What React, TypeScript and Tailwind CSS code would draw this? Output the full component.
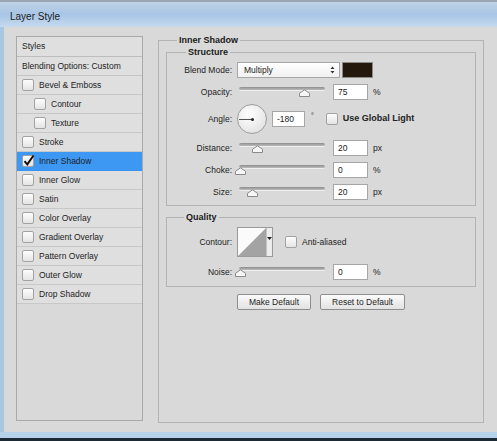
import type { ReactNode } from 'react'

type StyleRow = { label: string; sub?: boolean; checked?: boolean }

const styleRows: StyleRow[] = [
  { label: 'Bevel & Emboss' },
  { label: 'Contour', sub: true },
  { label: 'Texture', sub: true },
  { label: 'Stroke' },
  { label: 'Inner Shadow', checked: true },
  { label: 'Inner Glow' },
  { label: 'Satin' },
  { label: 'Color Overlay' },
  { label: 'Gradient Overlay' },
  { label: 'Pattern Overlay' },
  { label: 'Outer Glow' },
  { label: 'Drop Shadow' },
]

function CheckBox({ checked = false }: { checked?: boolean }) {
  return (
    <span className="relative block h-[12px] w-[12px] shrink-0 rounded-[2px] border border-[#a2a2a2] bg-gradient-to-b from-[#fdfdfd] to-[#e4e4e4]">
      {checked && (
        <svg className="absolute -left-[1px] -top-[3px]" width="14" height="14" viewBox="0 0 14 14">
          <path d="M2.5 8.2l2.8 3.1L11.5 2.5" fill="none" stroke="#111" strokeWidth="2" />
        </svg>
      )}
    </span>
  )
}

function Slider({ pos }: { pos: number }) {
  return (
    <div className="relative h-[16px] w-[96px]">
      <div className="absolute left-[2px] top-[3px] h-[4px] w-[86px] rounded-full border-b border-[#eeeeee] bg-gradient-to-b from-[#8c8c8c] to-[#bdbdbd]" />
      <svg className="absolute top-[5px]" style={{ left: 2 + pos - 5.5 }} width="11" height="8" viewBox="0 0 11 8">
        <path d="M0.5 7.5V4.3L5.5 0.8l5 3.5v3.2z" fill="#f6f6f6" stroke="#8a8a8a" />
      </svg>
    </div>
  )
}

function NumBox({ value, w = 'w-[35px]' }: { value: string; w?: string }) {
  return (
    <div className={`${w} h-[16px] border border-[#a6a6a6] bg-white pl-[4px] leading-[14px]`}>{value}</div>
  )
}

function Row({ label, className = '', children }: { label: string; className?: string; children: ReactNode }) {
  return (
    <div className={`flex items-center ${className}`}>
      <span className="w-[65px] text-right">{label}</span>
      <div className="ml-[5px] flex items-center">{children}</div>
    </div>
  )
}

function SliderRow({ label, pos, value, unit, className = '' }: { label: string; pos: number; value: string; unit: string; className?: string }) {
  return (
    <Row label={label} className={`h-[16px] ${className}`}>
      <Slider pos={pos} />
      <NumBox value={value} />
      <span className="ml-[5px]">{unit}</span>
    </Row>
  )
}

export default function App() {
  return (
    <div className="flex h-[441px] w-[497px] flex-col overflow-hidden font-['Liberation_Sans',Arial,sans-serif] text-[8.5px] text-[#222]">
      <div className="flex h-[27px] shrink-0 items-center border-t-2 border-[#9aa5b0] bg-gradient-to-b from-[#bfd2e6] via-[#a8c5e6] to-[#c6daee] pl-[10px] pt-[3px] text-[10px] text-[#1c1c1c]">
        Layer Style
      </div>

      <div className="flex flex-1 items-start border-l-4 border-[#a9c6e3] bg-[#d9d9d9] pl-[12px]">
        <div className="mt-[9px] flex h-[385px] w-[127px] flex-col border border-[#a9a9a9] bg-[#d9d9d9]">
          <div className="flex h-[20px] shrink-0 items-center border-b border-[#bdbdbd] bg-[#dfdfdf] pl-[5px]">Styles</div>
          <div className="flex h-[19px] shrink-0 items-center border-b border-[#c4c4c4] bg-[#dfdfdf] pl-[5px]">
            Blending Options: Custom
          </div>
          {styleRows.map(row => (
            <div
              key={row.label}
              className={`flex h-[19px] shrink-0 items-center gap-[5px] border-b ${
                row.checked ? 'border-[#3a93ee] bg-[#3d98f4]' : 'border-[#c8c8c8] bg-[#dfdfdf]'
              } ${row.sub ? 'pl-[17px]' : 'pl-[5px]'}`}
            >
              <CheckBox checked={row.checked} />
              <span>{row.label}</span>
            </div>
          ))}
        </div>

        <fieldset className="ml-[15px] mt-[7px] h-[389px] w-[326px] border border-[#b3b3b3]">
          <legend className="ml-[18px] px-[2px] text-[9px] font-bold leading-[12px] text-[#1a1a1a]">Inner Shadow</legend>

          <div className="flex flex-col items-center">
            <fieldset className="w-[310px] border border-[#b3b3b3] pb-[5px]">
              <legend className="ml-[19px] px-[2px] text-[9px] font-bold leading-[12px] text-[#1a1a1a]">Structure</legend>

              <Row label="Blend Mode:" className="mt-[4px] h-[16px]">
                <div className="flex h-[16px] w-[103px] items-center justify-between border border-[#a6a6a6] bg-gradient-to-b from-white to-[#f1f1f1] pl-[6px] pr-[4px]">
                  <span>Multiply</span>
                  <svg width="5" height="8" viewBox="0 0 5 8">
                    <path d="M2.5 0.5L4.5 3H0.5zM2.5 7.5L4.5 5H0.5z" fill="#333" />
                  </svg>
                </div>
                <div className="ml-[2px] h-[16px] w-[31px] border border-[#8a8a8a] bg-[#24170b]" />
              </Row>

              <SliderRow label="Opacity:" pos={65} value="75" unit="%" className="mt-[6px]" />

              <Row label="Angle:" className="mt-[4px] h-[30px]">
                <div className="relative h-[30px] w-[30px] rounded-full border border-[#9c9c9c] bg-[radial-gradient(circle_at_40%_35%,#ffffff,#e6e6e6_70%,#d2d2d2)]">
                  <div className="absolute left-[1px] top-[14px] h-px w-[13px] bg-[#555]" />
                  <div className="absolute left-[13px] top-[13px] h-[3px] w-[3px] rounded-full bg-[#222]" />
                </div>
                <div className="ml-[5px]">
                  <NumBox value="-180" w="w-[33px]" />
                </div>
                <span className="-mt-[5px] ml-[6px] text-[7px]">°</span>
                <div className="ml-[12px]">
                  <CheckBox />
                </div>
                <span className="ml-[5px] text-[9px] font-bold">Use Global Light</span>
              </Row>

              <SliderRow label="Distance:" pos={18.5} value="20" unit="px" className="mt-[6px]" />
              <SliderRow label="Choke:" pos={1.5} value="0" unit="%" className="mt-[6px]" />
              <SliderRow label="Size:" pos={13.5} value="20" unit="px" className="mt-[6px]" />
            </fieldset>

            <fieldset className="mt-[5px] w-[310px] border border-[#b3b3b3] pb-[6px]">
              <legend className="ml-[17px] px-[2px] text-[9px] font-bold leading-[12px] text-[#1a1a1a]">Quality</legend>

              <Row label="Contour:" className="mt-[4px] h-[30px]">
                <div className="flex h-[30px] w-[36px] border border-[#9a9a9a] bg-white">
                  <svg width="28" height="28" viewBox="0 0 28 28" className="block">
                    <rect width="28" height="28" fill="#fbfbfb" />
                    <path d="M0 28L28 0V28z" fill="#a3a3a3" />
                  </svg>
                  <div className="flex w-[6px] justify-center border-l border-[#c4c4c4] bg-[#ececec] pt-[9px]">
                    <svg width="5" height="3" viewBox="0 0 5 3">
                      <path d="M0 0h5L2.5 3z" fill="#222" />
                    </svg>
                  </div>
                </div>
                <div className="ml-[12px]">
                  <CheckBox />
                </div>
                <span className="ml-[5px]">Anti-aliased</span>
              </Row>

              <SliderRow label="Noise:" pos={1.5} value="0" unit="%" className="mt-[7px]" />
            </fieldset>

            <div className="mt-[7px] flex gap-[9px]">
              <button className="h-[16px] w-[74px] rounded-[2px] border border-[#8e8e8e] bg-gradient-to-b from-[#fbfbfb] to-[#e2e2e2] leading-[14px]">
                Make Default
              </button>
              <button className="h-[16px] w-[85px] rounded-[2px] border border-[#8e8e8e] bg-gradient-to-b from-[#fbfbfb] to-[#e2e2e2] leading-[14px]">
                Reset to Default
              </button>
            </div>
          </div>
        </fieldset>
      </div>

      <div className="h-[6px] shrink-0 bg-[#b5d2ea]" />
      <div className="h-[3px] shrink-0 bg-[#1c2a35]" />
    </div>
  )
}
